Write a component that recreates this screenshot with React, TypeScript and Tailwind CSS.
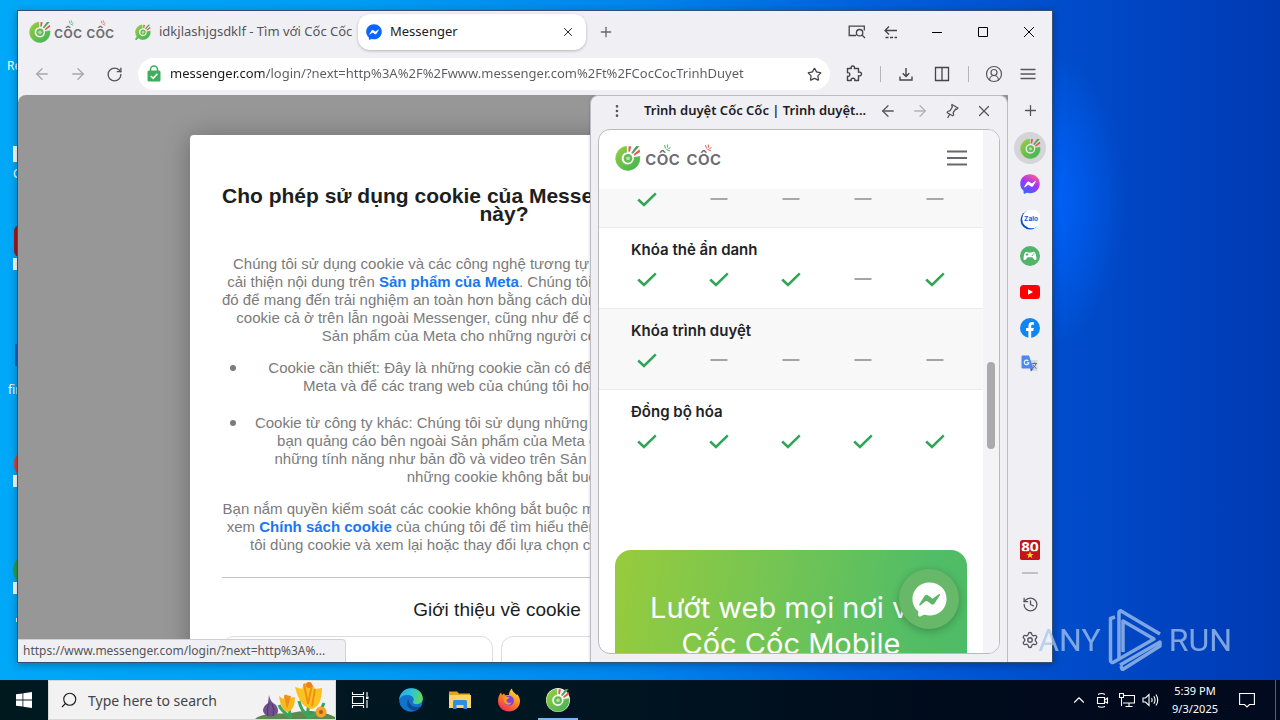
import React, { useId } from "react";
import {
  ArrowLeft,
  ArrowRight,
  ChevronUp,
  CircleUserRound,
  EllipsisVertical,
  History,
  Pin,
  Plus,
  RotateCw,
  Search,
  Settings,
  Star,
  X,
} from "lucide-react";

const UI = "font-['Noto_Sans','Open_Sans',sans-serif]";

function IconButton({
  label,
  className,
  children,
}: {
  label: string;
  className: string;
  children: React.ReactNode;
}) {
  return (
    <button
      type="button"
      aria-label={label}
      className={"flex shrink-0 items-center justify-center " + className}
    >
      {children}
    </button>
  );
}

function CocCocMark({ className }: { className: string }) {
  const id = useId();
  return (
    <svg viewBox="0 0 24 24" className={className} aria-hidden="true">
      <defs>
        <linearGradient id={id} x1="0" y1="0" x2="1" y2="1">
          <stop offset="0" stopColor="#9ccf3f" />
          <stop offset="0.5" stopColor="#6abf4b" />
          <stop offset="1" stopColor="#3fb257" />
        </linearGradient>
      </defs>
      <path
        d="M10.8 1.1 A11.2 11.2 0 1 0 22.9 10.6 L17.4 11.4 A5.8 5.8 0 1 1 10.9 6.6 Z"
        fill={`url(#${id})`}
        stroke={`url(#${id})`}
        strokeWidth="0.6"
      />
      <circle cx="12" cy="12.3" r="5.4" fill="#fff" opacity="0.55" />
      <circle cx="12" cy="12.3" r="4" fill="#64bd50" />
      <circle cx="12" cy="12.3" r="1.8" fill="#b7dfae" />
      <path d="M12.3 6 L12.6 1.2 L15 1.4 L13.8 6.3 Z" fill="#e8574d" />
      <path d="M15 7.1 L19.6 1 L22.6 1.2 L16.4 8 Z" fill="#45a852" />
      <path d="M17.2 8.6 L22.6 4 L23.2 6.4 L17.8 10 Z" fill="#e8574d" />
    </svg>
  );
}

function Sparks({ className }: { className: string }) {
  return (
    <svg viewBox="0 0 8 8" className={className} aria-hidden="true">
      <path
        d="M1.5 1.2 L2.6 4.6 M4.3 0.6 L4.5 3.6 M5.4 4.6 L7.4 3.6 M3.4 5.4 L7 7"
        fill="none"
        stroke="currentColor"
        strokeWidth="1"
      />
    </svg>
  );
}

function Wordmark({ large }: { large?: boolean }) {
  const size = large ? "text-[20px] gap-1.5" : "text-[16px] gap-1";
  const sparks = large
    ? "absolute -top-0.5 left-1/2 size-2"
    : "absolute top-0 left-1/2 size-1.5";
  return (
    <span
      className={
        "flex font-['Inter',sans-serif] leading-6 font-medium text-[#6c6c72] " + size
      }
    >
      <span className="relative">
        côc
        <Sparks className={sparks + " text-[#3fae5c]"} />
      </span>
      <span className="relative">
        côc
        <Sparks className={sparks + " text-[#e8574d]"} />
      </span>
    </span>
  );
}

function MessengerMark({
  className,
  from,
  to,
  bolt,
}: {
  className: string;
  from: string;
  to: string;
  bolt: string;
}) {
  const id = useId();
  return (
    <svg viewBox="0 0 24 24" className={className} aria-hidden="true">
      <defs>
        <linearGradient id={id} x1="0.2" y1="1" x2="0.7" y2="0">
          <stop offset="0" stopColor={from} />
          <stop offset="0.55" stopColor={from === to ? from : "#a334fa"} />
          <stop offset="1" stopColor={to} />
        </linearGradient>
      </defs>
      <path
        d="M12 .4C5.3.4.3 5.3.3 11.6c0 3.4 1.4 6.3 3.7 8.3.2.2.3.4.3.7v2.2c.1.7.8 1.1 1.4.8l2.5-1.1c.2-.1.4-.1.6 0 1 .3 2.1.5 3.2.5 6.7 0 11.7-5 11.7-11.4S18.700.4 12 .4Z"
        fill={`url(#${id})`}
      />
      <path
        d="M5 15.200l3.500-5.500c.5-.9 1.700-1.100 2.500-.5l2.700 2c.3.2.6.2.9 0l3.700-2.800c.5-.4 1.100.2.8.7l-3.500 5.500c-.5.9-1.700 1.100-2.500.5l-2.700-2c-.3-.2-.6-.2-.9 0l-3.700 2.800c-.5.4-1.100-.200-.8-.700Z"
        fill={bolt}
      />
    </svg>
  );
}

function TabStrip() {
  return (
    <div className="flex h-[42px] items-center pl-[11px]">
      <a href="#home" className="flex w-[106px] items-center gap-[3px]">
        <CocCocMark className="size-[22px]" />
        <Wordmark />
      </a>
      <button
        type="button"
        className="flex w-[223px] items-center gap-2 text-[13px] whitespace-nowrap text-[#55555c]"
      >
        <span className="relative size-4 shrink-0">
          <CocCocMark className="size-4" />
          <svg viewBox="0 0 16 16" className="absolute inset-0 size-4" aria-hidden="true">
            <path d="M4.500 11.500 L1.200 15" stroke="#5fb957" strokeWidth="2" strokeLinecap="round" />
          </svg>
        </span>
        idkjlashjgsdklf - Tìm với Cốc Cốc
      </button>
      <div className="flex h-9 w-[228px] items-center rounded-xl bg-white pr-2 pl-2 shadow-[0_1px_3px_rgba(0,0,0,0.25)]">
        <MessengerMark className="size-4" from="#0a66ff" to="#0a66ff" bolt="#fff" />
        <span className="flex-1 pl-2 text-[13px] text-[#202024]">Messenger</span>
        <IconButton label="Close tab" className="size-5 text-[#202024]">
          <X size={14} strokeWidth={1.700} />
        </IconButton>
      </div>
      <IconButton label="New tab" className="size-10 text-[#66666c]">
        <Plus size={16} strokeWidth={2} />
      </IconButton>
      <div className="ml-auto flex">
        <IconButton label="Search tabs" className="w-[34px] text-[#44444a]">
          <svg viewBox="0 0 18 16" className="h-4 w-[18px]" fill="none" stroke="currentColor" strokeWidth="1.3">
            <path d="M8 11.500H3V11.500H1.200V2.200H16.300V6.500" />
            <circle cx="11.600" cy="8.700" r="3.200" />
            <path d="M14 11 L17 14" />
          </svg>
        </IconButton>
        <IconButton label="Restore tab" className="mr-1.5 w-[34px] text-[#44444a]">
          <svg viewBox="0 0 16 16" className="size-4" fill="none" stroke="currentColor" strokeWidth="1.3">
            <path d="M6 2.500 L2 6.500 L6 10.500 M2 6.500 H14" />
            <path d="M2.500 13.500 H14" strokeDasharray="3 1.500" />
          </svg>
        </IconButton>
        <IconButton label="Minimize" className="w-[46px] text-black">
          <svg viewBox="0 0 10 10" className="size-2.5"><path d="M0 5.500H10" stroke="currentColor" /></svg>
        </IconButton>
        <IconButton label="Maximize" className="w-[46px] text-black">
          <svg viewBox="0 0 10 10" className="size-2.5"><path d="M.5 .5H9.500V9.500H.5Z" fill="none" stroke="currentColor" /></svg>
        </IconButton>
        <IconButton label="Close" className="w-[46px] text-black">
          <svg viewBox="0 0 10 10" className="size-2.5"><path d="M0 0L10 10M10 0L0 10" stroke="currentColor" /></svg>
        </IconButton>
      </div>
    </div>
  );
}

function Toolbar() {
  return (
    <div className="flex h-[42px] items-center pr-2 pl-1.5 text-[#55555b]">
      <IconButton label="Back" className="w-9 text-[#a5a5aa]">
        <ArrowLeft size={18} strokeWidth={1.700} />
      </IconButton>
      <IconButton label="Forward" className="w-9 text-[#a5a5aa]">
        <ArrowRight size={18} strokeWidth={1.700} />
      </IconButton>
      <IconButton label="Reload" className="w-9">
        <RotateCw size={17} strokeWidth={1.900} />
      </IconButton>
      <div className="mr-1.5 ml-1.5 flex h-8 flex-1 items-center rounded-full bg-white pr-1.5 pl-2">
        <svg viewBox="0 0 16 18" className="h-[18px] w-4" aria-hidden="true">
          <path d="M4.500 7V4.500a3.500 3.500 0 0 1 7 0V7" fill="none" stroke="#3fae5c" strokeWidth="1.600" />
          <rect x="1.500" y="5.500" width="13" height="11" rx="1.500" fill="#3fae5c" />
          <path d="M4.800 11 L7.200 13.400 L11.400 8.800" fill="none" stroke="#fff" strokeWidth="1.600" />
        </svg>
        <input
          aria-label="Address"
          defaultValue="messenger.com/login/?next=http%3A%2F%2Fwww.messenger.com%2Ft%2FCocCocTrinhDuyet"
          className="ml-2 min-w-0 flex-1 bg-[linear-gradient(90deg,#1a1a1e_94px,#5a5a60_94px)] bg-clip-text text-[13px] text-transparent outline-none"
        />
        <IconButton label="Bookmark" className="w-5 text-[#44444a]">
          <Star size={15} strokeWidth={2} />
        </IconButton>
      </div>
      <IconButton label="Extensions" className="w-9 text-[#44444a]">
        <svg viewBox="0 0 18 18" className="size-[18px]" fill="none" stroke="currentColor" strokeWidth="1.400" strokeLinejoin="round">
          <path d="M2.500 3.500H6.300C5.700 1.900 6.500 1 7.800 1s2.100.9 1.500 2.500H13.500V7.300C15.200 6.700 16.500 7.500 16.500 9s-1.300 2.300-3 1.700V15.500H9.800C10.200 14 9.300 13.300 8 13.300S5.800 14 6.200 15.500H2.500V11.300C4 11.600 4.800 10.700 4.800 9.500S4 7.400 2.500 7.700Z" />
        </svg>
      </IconButton>
      <span className="flex w-4 justify-center"><span className="h-4 w-px bg-[#b4b4b9]" /></span>
      <IconButton label="Downloads" className="w-9 text-[#44444a]">
        <svg viewBox="0 0 16 16" className="size-4" fill="none" stroke="currentColor" strokeWidth="1.400">
          <path d="M8 2V10.500M4.700 7.300L8 10.600L11.300 7.300M2 10.500V14H14V10.500" />
        </svg>
      </IconButton>
      <IconButton label="Split view" className="w-9 text-[#44444a]">
        <svg viewBox="0 0 16 16" className="size-4" fill="none" stroke="currentColor" strokeWidth="1.300">
          <path d="M1.500 1.500H14.500V14.500H1.500ZM8 1.500V14.500" />
        </svg>
      </IconButton>
      <span className="flex w-4 justify-center"><span className="h-4 w-px bg-[#b4b4b9]" /></span>
      <IconButton label="Profile" className="w-9">
        <CircleUserRound size={18} strokeWidth={1.600} />
      </IconButton>
      <IconButton label="Menu" className="w-8">
        <svg viewBox="0 0 16 12" className="h-3 w-4"><path d="M.5 1.500H15.500M.5 6H15.500M.5 10.500H15.500" stroke="currentColor" strokeWidth="1.300" /></svg>
      </IconButton>
    </div>
  );
}

function Lines({ rows }: { rows: React.ReactNode[] }) {
  return (
    <>
      {rows.map((row, i) => (
        <span key={i} className="block">
          {row}
        </span>
      ))}
    </>
  );
}

function CookieDialog() {
  const link = "font-bold text-[#1877f2]";
  return (
    <section className="mx-auto mt-10 w-[628px] rounded-sm bg-white px-8 pt-[52px] text-center font-['Liberation_Sans',sans-serif] text-[15px] leading-[18px] whitespace-nowrap text-[#7b7b7b] shadow-[0_2px_26px_rgba(0,0,0,0.3)]">
      <h1 className="text-[21px] leading-[18px] font-bold text-[#1c1e21]">
        <Lines rows={["Cho phép sử dụng cookie của Messenger bằng trình duyệt", "này?"]} />
      </h1>
      <p className="mt-8">
        <Lines
          rows={[
            "Chúng tôi sử dụng cookie và các công nghệ tương tự để giúp cung cấp cũng như",
            <>
              cải thiện nội dung trên <a href="#meta" className={link}>Sản phẩm của Meta</a>. Chúng tôi cũng dùng nhiều công nghệ
            </>,
            "đó để mang đến trải nghiệm an toàn hơn bằng cách dùng thông tin nhận được từ các",
            "cookie cả ở trên lẫn ngoài Messenger, cũng như để cung cấp và cải thiện những",
            "Sản phẩm của Meta cho những người có tài khoản đó.",
          ]}
        />
      </p>
      <ul className="mt-[14px] flex flex-col gap-[19px]">
        {[
          [
            "Cookie cần thiết: Đây là những cookie cần có để sử dụng Sản phẩm thuộc",
            "Meta và để các trang web của chúng tôi hoạt động như dự định.",
          ],
          [
            "Cookie từ công ty khác: Chúng tôi sử dụng những cookie này giúp hiển thị cho",
            "bạn quảng cáo bên ngoài Sản phẩm của Meta cũng như cung cấp thêm",
            "những tính năng như bản đồ và video trên Sản phẩm của Meta. Bạn cần",
            "những cookie không bắt buộc đó",
          ],
        ].map((rows) => (
          <li key={rows[0]} className="flex">
            <span className="w-6 pt-1.5 pl-2">
              <span className="block size-1.5 rounded-full bg-[#7b7b7b]" />
            </span>
            <span className="flex-1">
              <Lines rows={rows} />
            </span>
          </li>
        ))}
      </ul>
      <p className="mt-[14px]">
        <Lines
          rows={[
            "Bạn nắm quyền kiểm soát các cookie không bắt buộc mà chúng tôi sử dụng. Xin hãy",
            <>
              xem <a href="#policy" className={link}>Chính sách cookie</a> của chúng tôi để tìm hiểu thêm về cách thức cụ thể chúng
            </>,
            "tôi dùng cookie và xem lại hoặc thay đổi lựa chọn của mình bất cứ hôm nào.",
          ]}
        />
      </p>
      <hr className="mt-[23px] border-[#c4c4c4]" />
      <div className="pt-5 pr-[14px]">
        <h2 className="text-[19px] leading-6 text-[#1c1e21]">Giới thiệu về cookie</h2>
        <div className="mt-[14px] grid grid-cols-2 gap-2">
          <div className="h-20 rounded-xl border border-[#dadce0]" />
          <div className="h-20 rounded-xl border border-[#dadce0]" />
        </div>
      </div>
    </section>
  );
}

type Feature = { name: string; cells: boolean[]; shaded: boolean };

const FEATURES: Feature[] = [
  { name: "Khóa thẻ ẩn danh", cells: [true, true, true, false, true], shaded: false },
  { name: "Khóa trình duyệt", cells: [true, false, false, false, false], shaded: true },
  { name: "Đồng bộ hóa", cells: [true, true, true, true, true], shaded: false },
];

function Mark({ on }: { on: boolean }) {
  return (
    <svg viewBox="0 0 20 20" className="mx-auto block size-5" role="img" aria-label={on ? "Có" : "Không"}>
      {on ? (
        <path d="M1.200 10.500 L7 16 L18.800 4.400" fill="none" stroke="#2fa557" strokeWidth="2.500" />
      ) : (
        <path d="M1.500 10H18.500" stroke="#8e8e92" strokeWidth="1.600" />
      )}
    </svg>
  );
}

function SidePanel() {
  return (
    <aside className="absolute top-0 right-0 bottom-0 flex w-[418px] flex-col rounded-t-lg border border-b-0 border-[#bcbcc2] bg-[#f0f0f4] px-[7px] pb-2 shadow-[0_0_3px_rgba(0,0,0,0.2)]">
      <header className="flex h-[33px] shrink-0 items-center pb-1 text-[#55555b]">
        <IconButton label="More" className="w-[38px]">
          <EllipsisVertical size={16} strokeWidth={2} />
        </IconButton>
        <h2 className="flex-1 truncate pl-2 text-[13px] font-semibold text-[#202024]">
          Trình duyệt Cốc Cốc | Trình duyệt...
        </h2>
        <IconButton label="Panel back" className="w-8"><ArrowLeft size={18} strokeWidth={1.700} /></IconButton>
        <IconButton label="Panel forward" className="w-8 text-[#b0b0b5]"><ArrowRight size={18} strokeWidth={1.700} /></IconButton>
        <IconButton label="Pin panel" className="w-8">
          <svg viewBox="0 0 16 16" className="size-4" fill="none" stroke="currentColor" strokeWidth="1.300" strokeLinejoin="round">
            <path d="M8 1.500L14 5L12.600 6.300L11.700 6L9.200 9.500L9.600 12L8.600 12.800L3.200 9.700L3.700 8.500L6.200 7.600L8.400 3.700L7.700 2.800ZM5.800 11.200L3.600 15" />
          </svg>
        </IconButton>
        <IconButton label="Close panel" className="w-8"><X size={18} strokeWidth={1.600} /></IconButton>
      </header>
      <div className="flex min-h-0 flex-1 overflow-hidden rounded-xl border border-[#b9b9be] bg-white">
        <div className="relative min-w-0 flex-1 overflow-hidden font-['Inter',sans-serif]">
          <div className="flex h-[59px] items-center justify-between px-4 pb-1">
            <a href="#coccoc" className="flex items-center gap-1">
              <CocCocMark className="size-[26px]" />
              <Wordmark large />
            </a>
            <IconButton label="Site menu" className="text-[#69696d]">
              <svg viewBox="0 0 20 16" className="h-4 w-5"><path d="M0 1.500H20M0 8H20M0 14.500H20" stroke="currentColor" strokeWidth="2.200" /></svg>
            </IconButton>
          </div>
          <table className="w-full table-fixed border-collapse">
            <tbody className="border-b border-[#ebebee] bg-[#f8f8f8]">
              <tr>
                <td className="w-3" />
                {[true, false, false, false, false].map((on, i) => (
                  <td key={i} className="h-[38px] p-0 align-top"><Mark on={on} /></td>
                ))}
                <td className="w-3" />
              </tr>
            </tbody>
            {FEATURES.map((f, n) => (
              <tbody
                key={f.name}
                className={
                  (f.shaded ? "bg-[#f8f8f8]" : "bg-white") +
                  (n < FEATURES.length - 1 ? " border-b border-[#ebebee]" : "")
                }
              >
                <tr>
                  <th colSpan={7} scope="rowgroup" className="h-[37px] p-0 pt-2 pl-8 text-left align-top text-[15px] leading-7 font-semibold text-[#222226]">
                    {f.name}
                  </th>
                </tr>
                <tr>
                  <td />
                  {f.cells.map((on, i) => (
                    <td key={i} className="h-[44px] p-0 pt-[5px] align-top"><Mark on={on} /></td>
                  ))}
                  <td />
                </tr>
              </tbody>
            ))}
          </table>
          <div className="mx-4 mt-20 h-60 rounded-2xl bg-[linear-gradient(100deg,#97cb3c_0%,#7ac650_35%,#52bd66_80%,#4cba66_100%)] pt-10 text-center text-[29px] leading-9 text-white">
            Lướt web mọi nơi với
            <br />
            Cốc Cốc Mobile
          </div>
          <button
            type="button"
            aria-label="Chat"
            className="absolute right-6 bottom-6 flex size-[60px] items-center justify-center rounded-full bg-[#68b86a] shadow-[0_2px_8px_rgba(0,0,0,0.25)]"
          >
            <MessengerMark className="size-[35px]" from="#fff" to="#fff" bolt="#5fb566" />
          </button>
        </div>
        <div className="w-4 bg-[#f4f4f6] pt-[232px] pl-1">
          <div className="h-[87px] w-2 rounded-full bg-[#ababae]" />
        </div>
      </div>
    </aside>
  );
}

function RailItem({ label, active, children }: { label: string; active?: boolean; children: React.ReactNode }) {
  return (
    <div className="flex h-9 items-center">
      <IconButton label={label} className={"size-8 rounded-full " + (active ? "bg-[#d5d5d9]" : "")}>
        {children}
      </IconButton>
    </div>
  );
}

function Rail() {
  return (
    <nav aria-label="Sidebar" className="flex w-11 shrink-0 flex-col items-center pb-1 text-[#55555b]">
      <IconButton label="Add" className="mb-[5px] h-[30px] w-8">
        <Plus size={17} strokeWidth={1.800} />
      </IconButton>
      <RailItem label="Cốc Cốc" active><CocCocMark className="size-[21px]" /></RailItem>
      <RailItem label="Messenger">
        <MessengerMark className="size-5" from="#2a6cff" to="#ff5c87" bolt="#fff" />
      </RailItem>
      <RailItem label="Zalo">
        <svg viewBox="0 0 20 20" className="size-5">
          <circle cx="10" cy="10" r="9.500" fill="#0c4ec4" />
          <ellipse cx="11.700" cy="8.900" rx="9.600" ry="9.400" fill="#fff" />
          <text x="11" y="11.300" textAnchor="middle" fontSize="6.500" fontWeight="700" fontFamily="Inter, sans-serif" fill="#0b5be0">Zalo</text>
        </svg>
      </RailItem>
      <RailItem label="Games">
        <svg viewBox="0 0 20 20" className="size-5">
          <circle cx="10" cy="10" r="10" fill="#52b36b" />
          <path d="M6.500 5.800C4.500 6 3.600 9.500 3.500 12.500c0 2 1.900 2 2.900.3L7.600 11.300h4.800l1.200 1.500c1 1.700 2.900 1.700 2.900-.3-.1-3-1-6.500-3-6.700-1 0-1.300.8-2 .8h-3c-.7 0-1-.8-2-.8Z" fill="#fff" />
          <path d="M7 7.200V10M5.600 8.600H8.400" stroke="#52b36b" />
          <circle cx="12.300" cy="9.300" r=".7" fill="#52b36b" />
          <circle cx="13.800" cy="7.900" r=".7" fill="#52b36b" />
        </svg>
      </RailItem>
      <RailItem label="YouTube">
        <svg viewBox="0 0 20 20" className="size-5">
          <rect y="3" width="20" height="14" rx="3.500" fill="#f00" />
          <path d="M8 7.200L13 10L8 12.800Z" fill="#fff" />
        </svg>
      </RailItem>
      <RailItem label="Facebook">
        <svg viewBox="0 0 20 20" className="size-5">
          <circle cx="10" cy="10" r="10" fill="#1285f2" />
          <path d="M8.400 20V13H6V10H8.400V7.900C8.400 5.300 9.900 4 12 4c.9 0 1.700.1 1.900.2V6.800H12.500c-1 0-1.300.6-1.300 1.300V10h2.600l-.5 3H11.200V20Z" fill="#fff" />
        </svg>
      </RailItem>
      <RailItem label="Translate">
        <svg viewBox="0 0 20 20" className="size-5">
          <path d="M8 6H17.500V17H12Z" fill="#d6d9de" />
          <path d="M1.500 2.500a1 1 0 0 1 1-1H9L13.500 14.500H2.500a1 1 0 0 1-1-1Z" fill="#4a89ee" />
          <path d="M13.500 14.500L11 17.500L10 14.500Z" fill="#2f56b5" />
          <path d="M8.300 6.900A2.300 2.300 0 1 0 8.800 8.800H6.700" fill="none" stroke="#fff" strokeWidth="1.100" />
          <path d="M12 9.500H17M14.500 8.500V9.500M16 9.500Q15 13 12.800 14M13 10.800Q14.500 13.500 16.500 14.500" fill="none" stroke="#667" strokeWidth=".9" />
        </svg>
      </RailItem>
      <div className="flex-1" />
      <RailItem label="80">
        <svg viewBox="0 0 20 20" className="size-5">
          <rect width="20" height="20" rx="2.500" fill="#c3141b" />
          <text x="10" y="12" textAnchor="middle" fontSize="13" fontWeight="800" fontFamily="Inter, sans-serif" fill="#fff">80</text>
          <path d="M0 11.300H20V17.500A2.500 2.500 0 0 1 17.500 20H2.500A2.500 2.500 0 0 1 0 17.500Z" fill="#c3141b" />
          <path d="M10 11.300L11 14H13.600L11.500 15.600L12.300 18.200L10 16.600L7.700 18.200L8.500 15.600L6.400 14H9Z" fill="#ffd92e" />
        </svg>
      </RailItem>
      <div className="h-[18px] pt-1"><div className="h-0.5 w-4 bg-[#c0c0c5]" /></div>
      <RailItem label="History"><History size={17} strokeWidth={1.800} /></RailItem>
      <RailItem label="Settings"><Settings size={18} strokeWidth={1.800} /></RailItem>
    </nav>
  );
}

function BrowserWindow() {
  return (
    <div className={"absolute top-[10px] right-[227px] bottom-[17px] left-[17px] flex flex-col overflow-hidden border border-[#35506e] bg-[#f0f0f4] shadow-[0_2px_8px_rgba(0,0,0,0.3)] " + UI}>
      <TabStrip />
      <Toolbar />
      <div className="flex min-h-0 flex-1">
        <main className="relative min-w-0 flex-1 overflow-hidden rounded-tl-lg">
          <div className="h-full overflow-hidden bg-[#979797] pr-[18px]">
            <CookieDialog />
          </div>
          <div className="absolute bottom-0 left-0 w-[328px] rounded-tr-sm border-t border-r border-[#d0d0d4] bg-[#f0f0f4] px-[5px] text-[12px] leading-[22px] text-[#55555b]">
            https://www.messenger.com/login/?next=http%3A%...
          </div>
          <SidePanel />
        </main>
        <Rail />
      </div>
    </div>
  );
}

function DesktopIcons() {
  return (
    <div className={"text-[12px] leading-4 text-white " + UI}>
      <span className="absolute top-[58px] left-[7px]">Re</span>
      <span className="absolute top-[146px] left-[13px] size-4 bg-white" />
      <span className="absolute top-[166px] left-[13px]">C</span>
      <span className="absolute top-[225px] left-[14px] h-8 w-8 rounded-md bg-[#a01a22]" />
      <span className="absolute top-[258px] left-[13px] size-3 bg-white" />
      <span className="absolute top-[344px] left-[15px] h-[22px] w-6 bg-[#1a62c4]" />
      <span className="absolute top-[382px] left-[8px]">fir</span>
      <span className="absolute top-[448px] left-[14px] size-8 rounded-full bg-[#d8443c]" />
      <span className="absolute top-[475px] left-[13px] size-3 bg-white" />
      <span className="absolute top-[554px] left-[13px] size-8 rounded-full bg-[#2f9e4c]" />
      <span className="absolute top-[582px] left-[13px] size-3 bg-white" />
      <span className="absolute top-[618px] left-[16px] h-1 w-1 bg-white" />
    </div>
  );
}

function Watermark() {
  return (
    <div className="pointer-events-none absolute right-12 bottom-2 flex h-16 items-center gap-1 font-['Liberation_Sans_Narrow','Roboto',sans-serif] text-[32px] leading-none text-[#a9c6ee] opacity-75">
      <span>ANY</span>
      <svg viewBox="0 0 60 64" className="h-16 w-[60px]" fill="none" stroke="currentColor" strokeWidth="3.500" strokeLinejoin="round">
        <path d="M14 50V4.500a1.500 1.500 0 0 1 2.500-1.200L55 26" />
        <path d="M10 9L5.500 10.500V52.500a2 2 0 0 0 3 1.700L49 31L18 13V44" />
        <path d="M16 58L17 61a1 1 0 0 0 1.500 0L55 38V34L15 57" />
      </svg>
      <span>RUN</span>
    </div>
  );
}

function Flowers() {
  return (
    <svg viewBox="0 0 80 38" className="h-[38px] w-20 shrink-0" aria-hidden="true">
      <path d="M0 38C8 31 26 33 36 32C50 28 70 30 80 36V38Z" fill="#5c8a4e" />
      <path d="M36 38Q34 28 33 22M53 38Q52 26 56 18M36 36Q26 30 24 24M54 36Q66 32 69 22M54 36Q46 30 44 20" fill="none" stroke="#3ba55a" strokeWidth="3" />
      <path d="M14 14Q15 21 21 24Q26 32 19 35Q10 37 8 30Q8 25 13 22Z" fill="#71508f" />
      <path d="M14 22Q11 28 13 35M17 23Q20 28 18 35" fill="none" stroke="#4d3570" />
      <path d="M24 15L28 18L31 13L35 17L40 16Q40 29 33 31Q26 30 24 15Z" fill="#f8b91e" />
      <path d="M29 14L32 28L36 15" fill="#f28c1a" />
      <path d="M40 6L47 8L49 2L57 3L60 8L67 7Q67 25 57 28Q45 27 40 6Z" fill="#fcc21f" />
      <path d="M49 3L53 23L57 4M60 8L57 25" fill="none" stroke="#f09018" strokeWidth="2" />
      <circle cx="54" cy="4" r="3" fill="#ef7f1a" />
      <circle cx="66" cy="31" r="5.500" fill="#f6a32b" />
      <circle cx="66" cy="31" r="2" fill="#b4561a" />
    </svg>
  );
}

function Taskbar() {
  return (
    <footer className={"flex h-10 shrink-0 bg-[linear-gradient(90deg,#00191f_0%,#001722_40%,#000b1c_75%,#010a1e_100%)] text-white " + UI}>
      <IconButton label="Start" className="w-12">
        <svg viewBox="0 0 16 16" className="size-4" fill="#fff">
          <path d="M0 2.300L6.500 1.400V7.600H0ZM7.300 1.300L16 0V7.600H7.300ZM0 8.400H6.500V14.600L0 13.700ZM7.300 8.400H16V16L7.300 14.700Z" />
        </svg>
      </IconButton>
      <label className="flex w-72 items-center border border-[#d8d8d8] bg-[#f2f2f2] pl-[11px] text-[#1d1d1f]">
        <Search size={18} strokeWidth={1.500} className="-scale-x-100" />
        <input
          aria-label="Search"
          placeholder="Type here to search"
          className="ml-2.5 min-w-0 flex-1 text-[14px] outline-none placeholder:text-[#444448]"
        />
        <Flowers />
      </label>
      <IconButton label="Task view" className="mr-0.5 w-12">
        <svg viewBox="0 0 18 16" className="h-4 w-[18px]" fill="none" stroke="#fff" strokeWidth="1.100">
          <path d="M1.500 4.500H12.500V11.500H1.500ZM1.500 0V2.500H12.500V0M1.500 16V13.500H12.500V16M16 0V4M16 8V16" />
          <path d="M15 4.500H17.500V7H15Z" fill="#fff" stroke="none" />
        </svg>
      </IconButton>
      <IconButton label="Microsoft Edge" className="w-[49px]">
        <svg viewBox="0 0 24 24" className="size-6">
          <defs>
            <linearGradient id="edgeTop" x1="0" y1="0.300" x2="1" y2="0.500">
              <stop offset="0" stopColor="#2aa8e8" />
              <stop offset="0.500" stopColor="#2fc3d6" />
              <stop offset="1" stopColor="#5fdc58" />
            </linearGradient>
          </defs>
          <circle cx="12" cy="12" r="11.800" fill="#1173c9" />
          <path d="M.2 11.500C1 4.500 6 .2 12.500.2C19 .2 23.800 5 23.800 10.300c0 3.700-2.900 5.900-5.900 5.900-2.700 0-4-.9-4-1.700 0-.6.900-1.300.9-2.900C14.800 8.900 11.800 7 8.300 7 4.500 7 1.500 8.800.2 11.500Z" fill="url(#edgeTop)" />
          <path d="M9.500 11C6.500 14.500 8.500 21.500 15 22.500c3 0 5.500-2 7-4.500-6.500 3.200-12-.5-12.500-7Z" fill="#0b4a94" />
        </svg>
      </IconButton>
      <IconButton label="File Explorer" className="w-[49px]">
        <svg viewBox="0 0 24 24" className="size-6">
          <path d="M1 3.500H9L11 5.500H22V8H1Z" fill="#e8a21c" />
          <path d="M1 7H23V20H1Z" fill="#fbd468" />
          <path d="M5 13.500a1.500 1.500 0 0 1 1.500-1.500H17.500a1.500 1.500 0 0 1 1.500 1.500V21H15.500V17H8.500V21H5Z" fill="#2f8fdc" />
        </svg>
      </IconButton>
      <IconButton label="Firefox" className="w-[49px]">
        <svg viewBox="0 0 24 24" className="size-6">
          <defs>
            <linearGradient id="fox" x1="0.800" y1="0" x2="0.200" y2="1">
              <stop offset="0" stopColor="#ffe141" />
              <stop offset="0.450" stopColor="#ff8a1e" />
              <stop offset="1" stopColor="#f0245e" />
            </linearGradient>
          </defs>
          <path d="M12 23.500C5.500 23.500 1 18.800 1 12.800C1 9 2.500 6.500 4 4.500L5 7L7 5.500L8.500 7.500C10 7 10.500 6.800 12 7C12 4 13.500 1.500 15 .5C15 3.500 18 5 19.500 7L20 6C22 8.500 23 10.500 23 13C23 19 18 23.500 12 23.500Z" fill="url(#fox)" />
          <circle cx="12" cy="12.800" r="5" fill="#7b45dd" />
          <path d="M6.500 9.500C9 8 11 9 12.500 9.500C12 11 9.500 10.800 9.500 12.500C9.500 14.500 12 15.500 14.500 14.500C12.500 18.500 6 17.500 6.500 9.500Z" fill="#ff9a20" />
        </svg>
      </IconButton>
      <div className="flex w-[49px] flex-col items-center">
        <IconButton label="Cốc Cốc" className="h-[38px] w-10">
          <span className="mt-0.5 flex size-6 items-center justify-center rounded-full bg-[#f4f7f2]">
            <CocCocMark className="size-6" />
          </span>
        </IconButton>
        <span className="h-0.5 w-10 bg-[#76b9ed]" />
      </div>
      <div className="ml-auto flex">
        <IconButton label="Show hidden icons" className="w-6"><ChevronUp size={18} strokeWidth={1.500} /></IconButton>
        <IconButton label="Meet now" className="w-6">
          <svg viewBox="0 0 16 16" className="size-4" fill="none" stroke="#fff" strokeWidth="1.100">
            <path d="M2.500 5.500H9.500V11.500H2.500ZM9.500 8L12.500 6V11L9.500 9.500M3 2.500Q6.500 .5 10 2.500M3 14.500Q6.500 16 10 14.500" />
          </svg>
        </IconButton>
        <IconButton label="Network" className="w-6">
          <svg viewBox="0 0 16 16" className="size-4" fill="none" stroke="#fff" strokeWidth="1.100">
            <path d="M5 3.500H15.500V11H4M10 11V14.500M6.500 14.500H13.500M.5 1.500H4.500V5.500H.5ZM2.500 5.500V14" />
          </svg>
        </IconButton>
        <IconButton label="Volume" className="w-6">
          <svg viewBox="0 0 18 16" className="h-4 w-[18px]" fill="none" stroke="#fff" strokeWidth="1.100">
            <path d="M1 6H3.500L7 2.500V13.500L3.500 10H1ZM9.500 6Q10.800 8 9.500 10M11.800 4.200Q14.300 8 11.800 11.800M14 2.500Q17.500 8 14 13.500" />
          </svg>
        </IconButton>
        <div className="flex w-16 flex-col justify-center text-center text-[11px] leading-[18px]">
          <time>5:39 PM</time>
          <time>9/3/2025</time>
        </div>
        <IconButton label="Notifications" className="w-10">
          <svg viewBox="0 0 16 16" className="size-4" fill="none" stroke="#fff" strokeWidth="1.100">
            <path d="M.6 1.500H15.400V12.500H10.500L8 15L5.500 12.500H.6Z" />
          </svg>
        </IconButton>
        <span className="ml-2 w-[5px] border-l border-[#5a6070]" />
      </div>
    </footer>
  );
}

export default function App() {
  return (
    <div className="flex h-screen flex-col overflow-hidden">
      <div className="relative flex-1 overflow-hidden bg-[radial-gradient(ellipse_80px_150px_at_1045px_200px,#0064ff_0%,#0064ff00_100%),linear-gradient(90deg,#00a8f8_0%,#009cf4_28%,#0084ec_50%,#0060dc_68%,#004ecc_82%,#0044c2_90%,#003ab2_100%)]">
        <DesktopIcons />
        <BrowserWindow />
        <Watermark />
      </div>
      <Taskbar />
    </div>
  );
}
